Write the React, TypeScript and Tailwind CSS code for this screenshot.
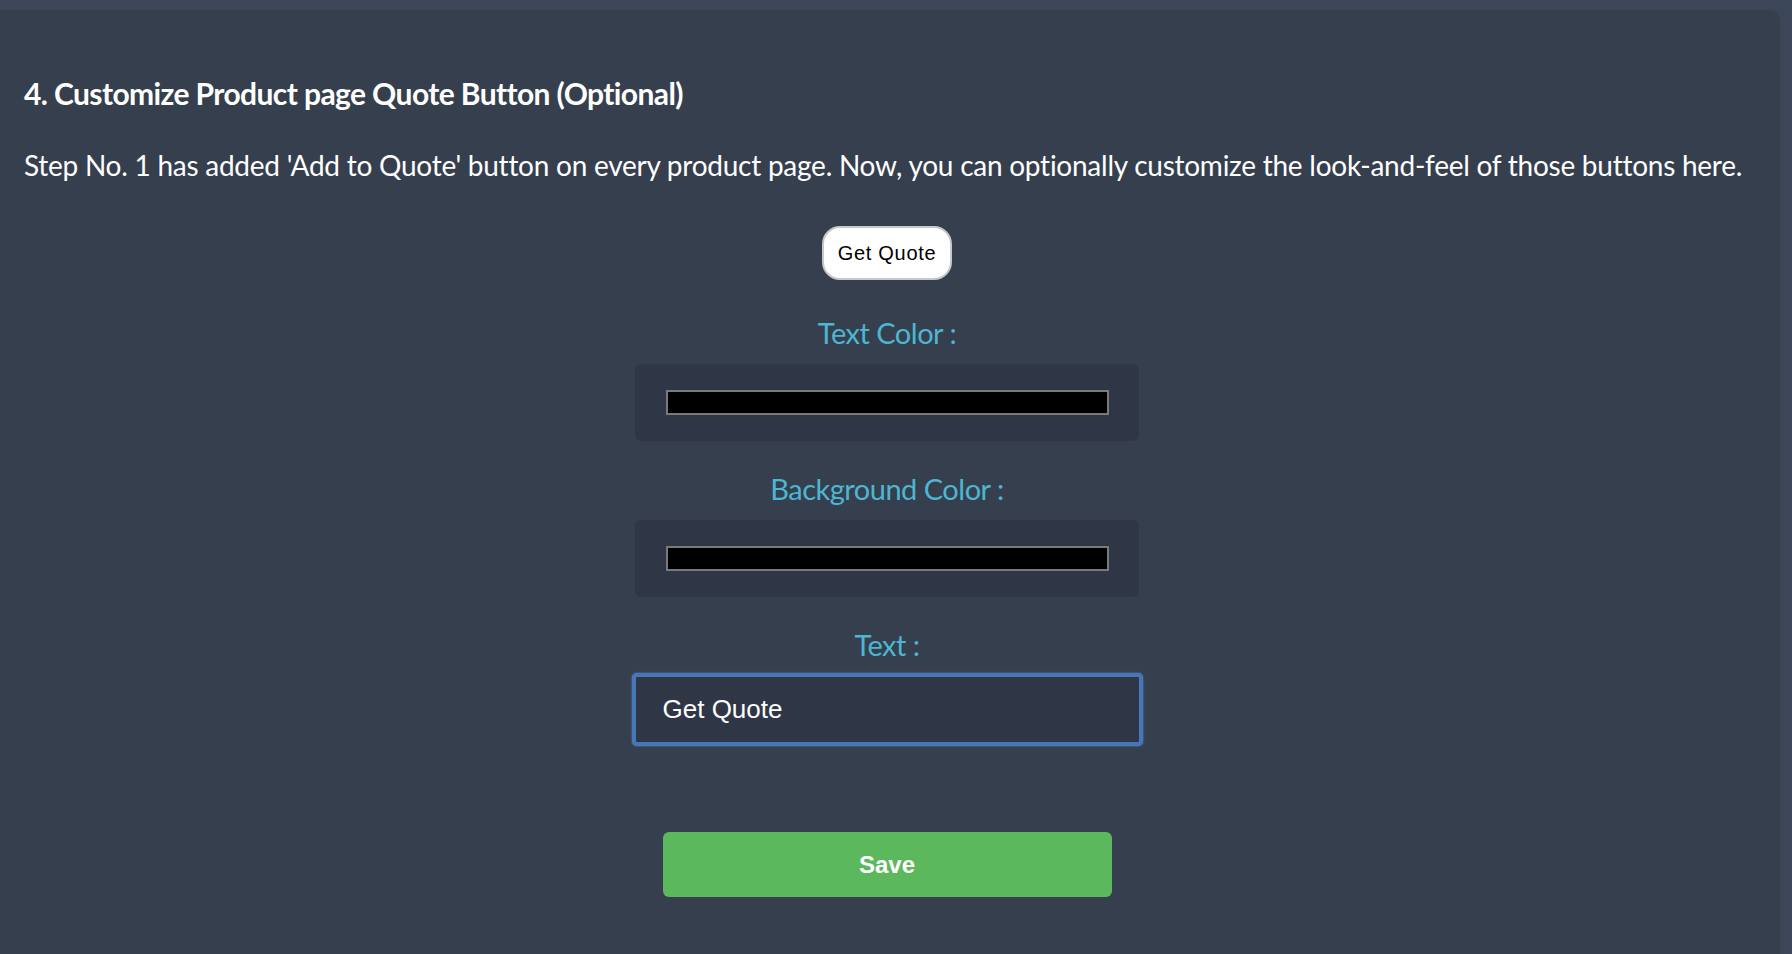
import { useState } from "react";

function ColorField({ label, value, onChange }: { label: string; value: string; onChange: (v: string) => void }) {
  return (
    <div className="flex flex-col items-center">
      <label className="text-[29px] leading-[32px] tracking-[-0.5px] text-[#4db6d0] mb-[15px]">{label}</label>
      <div className="w-[504px] h-[77px] bg-[#2f3747] rounded-[6px] flex items-center justify-center">
        <input
          type="color"
          value={value}
          onChange={(e) => onChange(e.target.value)}
          className="hidden"
        />
        <div className="w-[443px] h-[25px] border-2 border-[#7a7a7a]" style={{ backgroundColor: value }} />
      </div>
    </div>
  );
}

function App() {
  const [textColor, setTextColor] = useState("#000000");
  const [bgColor, setBgColor] = useState("#000000");
  const [text, setText] = useState("Get Quote");

  return (
    <div className="min-h-screen bg-[#3b4658] pt-[10px] pr-[12px] font-['Lato',_'Open_Sans',_sans-serif]">
      <div className="min-h-[944px] bg-[#363f4e] rounded-tr-[10px] pl-[24px] pr-[30px] pt-[66px]">
        <h2 className="text-[30px] leading-[34px] font-bold text-white tracking-[-0.6px]">
          4. Customize Product page Quote Button (Optional)
        </h2>
        <p className="mt-[38px] text-[28px] leading-[34px] text-white tracking-[-0.25px] whitespace-nowrap">
          Step No. 1 has added 'Add to Quote' button on every product page. Now, you can optionally customize the look-and-feel of those buttons here.
        </p>

        <div className="flex flex-col items-center mt-[44px]">
          <button className="h-[54px] px-[14px] rounded-[18px] bg-white border-2 border-[#c8c8c8] text-black text-[20px] tracking-[0.7px] font-['Liberation_Sans',_Arial,_sans-serif]">
            Get Quote
          </button>

          <div className="mt-[37px]">
            <ColorField label="Text Color :" value={textColor} onChange={setTextColor} />
          </div>
          <div className="mt-[32px]">
            <ColorField label="Background Color :" value={bgColor} onChange={setBgColor} />
          </div>

          <div className="mt-[32px] flex flex-col items-center">
            <label className="text-[29px] leading-[32px] tracking-[-0.5px] text-[#4db6d0] mb-[12px]">Text :</label>
            <input
              value={text}
              onChange={(e) => setText(e.target.value)}
              className="w-[511px] h-[73px] bg-[#2f3747] border-[4px] border-[#4577ba] rounded-[5px] pl-[27px] text-white text-[26px] outline-none shadow-[0_0_2px_#5b8fd6] font-['Liberation_Sans',_Arial,_sans-serif]"
            />
          </div>

          <button className="mt-[86px] w-[449px] h-[65px] rounded-[6px] bg-[#5cb85c] text-white text-[24px] font-bold font-['Liberation_Sans',_Arial,_sans-serif]">
            Save
          </button>
        </div>
      </div>
    </div>
  );
}

export default App;
